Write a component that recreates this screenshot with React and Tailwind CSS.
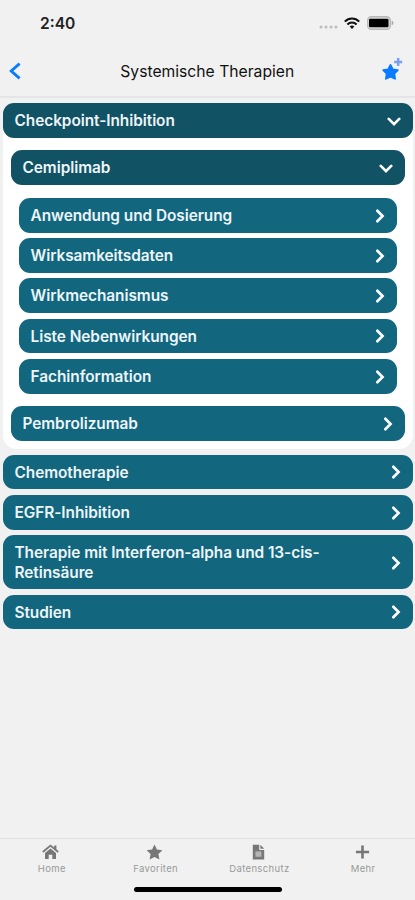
import React from 'react';

const CHEVRONS = {
  right: 'M3.8 2 L9.8 8 L3.8 14',
  down: 'M2 5.6 L8 11.6 L14 5.6',
};

const Chevron = ({ open }) => (
  <svg
    viewBox="0 0 16 16"
    className={open ? 'h-[14px] w-[14px] shrink-0' : '-mr-[3px] h-[14px] w-[14px] shrink-0'}
    fill="none"
    stroke="white"
    strokeWidth="3"
    strokeLinecap="round"
  >
    <path d={open ? CHEVRONS.down : CHEVRONS.right} />
  </svg>
);

const Row = ({ label, open = false, tall = false }) => (
  <button
    className={`flex w-full items-center justify-between rounded-[11px] pt-px pr-3 pl-3 text-left text-[15.4px] leading-[19.5px] font-semibold tracking-[-0.05px] text-[#edf5f8] ${
      open ? 'bg-[#115264]' : 'bg-[#12677f]'
    } ${tall ? 'h-[54px]' : 'h-[34.75px]'}`}
  >
    <span className="max-w-[330px]">{label}</span>
    <Chevron open={open} />
  </button>
);

const StatusBar = () => (
  <div className="flex h-[46px] items-center justify-between pr-[21px] pl-10">
    <span className="pt-px text-[15.6px] font-semibold text-[#222]">2:40</span>
    <div className="flex items-center">
      <svg viewBox="0 0 19 4" className="mt-2 mr-[6px] h-1 w-[19px]" fill="#bcbcbc">
        <circle cx="2" cy="2" r="1.5" />
        <circle cx="7" cy="2" r="1.5" />
        <circle cx="12" cy="2" r="1.5" />
        <circle cx="17" cy="2" r="1.5" />
      </svg>
      <svg viewBox="0 0 16 12" className="mr-[7px] h-3 w-4" fill="none" stroke="#111" strokeWidth="2.1">
        <path d="M0.8 4.6 C4.8 0.4 11.2 0.4 15.2 4.6" />
        <path d="M3.4 7.4 C6 4.8 10 4.8 12.6 7.4" />
        <path d="M8 12 L5.7 9.5 C7 8.3 9 8.3 10.3 9.5 Z" fill="#111" stroke="none" />
      </svg>
      <svg viewBox="0 0 27 14" className="h-[14px] w-[27px]">
        <rect x="0.7" y="0.7" width="22.6" height="12.6" rx="3.6" fill="#dedede" stroke="#b9b9b9" strokeWidth="1.4" />
        <rect x="2" y="2.8" width="19.5" height="8.4" rx="1.2" fill="#000" />
        <path d="M24.6 4.6 C27 5.4 27 8.6 24.6 9.4 Z" fill="#a9a9a9" />
      </svg>
    </div>
  </div>
);

const Header = () => (
  <div className="flex h-[52px] items-center justify-between border-b-2 border-[#e4e5e6] pr-[11.5px] pl-[9px]">
    <svg viewBox="0 0 12 18" className="mb-px h-[18px] w-3" fill="none" stroke="#087bff" strokeWidth="2.8">
      <path d="M10.6 1.6 L2.2 9 L10.6 16.4" />
    </svg>
    <h1 className="pt-px pl-[12px] text-[15.7px] text-[#111]">Systemische Therapien</h1>
    <svg viewBox="0 0 22 24" className="mb-1 h-6 w-[22px]">
      <path
        d="M8.5 7.9 L10.8 12.3 L15.8 13.1 L12.3 16.7 L13.1 21.8 L8.5 19.6 L3.9 21.8 L4.7 16.7 L1.2 13.1 L6.2 12.3 Z"
        fill="#087bff"
        stroke="#087bff"
        strokeWidth="1.8"
        strokeLinejoin="round"
      />
      <path d="M16.2 1 V9 M12.2 5 H20.2" stroke="#7c9df7" strokeWidth="2.4" />
    </svg>
  </div>
);

const SUB_ITEMS = [
  'Anwendung und Dosierung',
  'Wirksamkeitsdaten',
  'Wirkmechanismus',
  'Liste Nebenwirkungen',
  'Fachinformation',
];

const ICONS = {
  home: (
    <>
      <path d="M0.8 8 L8.5 1.6 L16.2 8" fill="none" stroke="currentColor" strokeWidth="1.8" />
      <path d="M12.2 1.4 H14.4 V6 L12.2 4.2 Z" />
      <path d="M8.5 4.4 L14 9 V15 H10.3 V10.8 H6.7 V15 H3 V9 Z" />
    </>
  ),
  star: (
    <path d="M8.5 0.4 L10.9 5.4 L16.4 6.2 L12.4 10 L13.4 15.6 L8.5 12.9 L3.6 15.6 L4.6 10 L0.6 6.2 L6.1 5.4 Z" />
  ),
  document: (
    <>
      <path d="M2.8 0.8 H9.2 V6 H14.2 V15.6 H2.8 Z" />
      <path d="M10.4 0.8 L14.2 4.8 H10.4 Z" />
      <path d="M5.4 7.4 H11.4 V12.8 H5.4 Z" fill="#b5b5b5" />
    </>
  ),
  plus: <path d="M8.5 1.4 V14.6 M1.9 8 H15.1" stroke="currentColor" strokeWidth="2.6" />,
};

const TABS = [
  { label: 'Home', icon: 'home' },
  { label: 'Favoriten', icon: 'star' },
  { label: 'Datenschutz', icon: 'document' },
  { label: 'Mehr', icon: 'plus' },
];

const TabBar = () => (
  <nav className="flex h-[62px] flex-col border-t border-[#e0e0e0]">
    <div className="grid h-[48px] grid-cols-4 pt-[5px]">
      {TABS.map((tab) => (
        <div key={tab.label} className="flex flex-col items-center text-[#777]">
          <svg viewBox="0 0 17 16" className="mr-[2px] h-4 w-[17px]" fill="currentColor">
            {ICONS[tab.icon]}
          </svg>
          <span className="mt-[3px] text-[9.5px] leading-3 tracking-[0.35px] text-[#999]">{tab.label}</span>
        </div>
      ))}
    </div>
    <div className="mx-auto h-[5px] w-[148px] rounded-full bg-black" />
  </nav>
);

export default function App() {
  return (
    <div className="flex h-[900px] w-[415px] flex-col bg-[#f1f1f1] font-['Inter','Liberation_Sans',sans-serif]">
      <StatusBar />
      <Header />
      <main className="flex flex-1 flex-col gap-[5.5px] pt-[5px] pr-[2px] pl-[2.5px]">
        <section className="rounded-[14px] bg-white pb-2">
          <Row label="Checkpoint-Inhibition" open />
          <div className="flex flex-col gap-[12.75px] px-2 pt-[12.5px]">
            <Row label="Cemiplimab" open />
            <div className="flex flex-col gap-[5.5px] px-2">
              {SUB_ITEMS.map((item) => (
                <Row key={item} label={item} />
              ))}
            </div>
            <Row label="Pembrolizumab" />
          </div>
        </section>
        <Row label="Chemotherapie" />
        <Row label="EGFR-Inhibition" />
        <Row label="Therapie mit Interferon-alpha und 13-cis-Retinsäure" tall />
        <Row label="Studien" />
      </main>
      <TabBar />
    </div>
  );
}
